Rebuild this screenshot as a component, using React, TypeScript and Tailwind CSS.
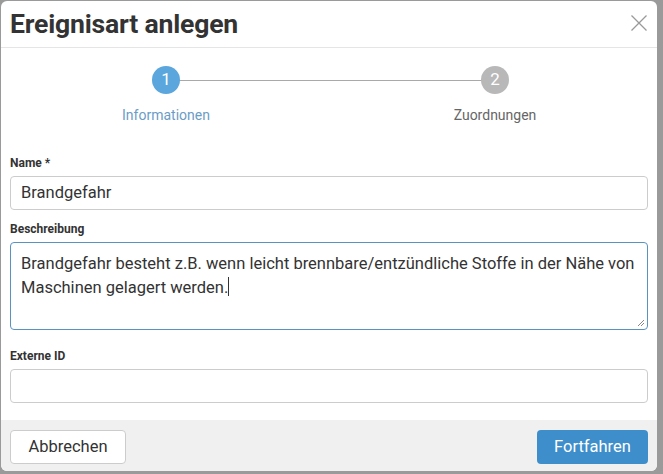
import React from "react";

function Step({
  num,
  label,
  active,
}: {
  num: number;
  label: string;
  active?: boolean;
}) {
  return (
    <div className="flex flex-col items-center w-[160px]">
      <div
        className={`w-[28px] h-[28px] rounded-full flex items-center justify-center text-white text-[17px] ${
          active ? "bg-[#5aa6dd]" : "bg-[#b8b8b8]"
        }`}
      >
        {num}
      </div>
      <span
        className={`mt-[11px] text-[14px] ${
          active ? "text-[#6b9cc6]" : "text-[#666]"
        }`}
      >
        {label}
      </span>
    </div>
  );
}

export default function App() {
  return (
    <div
      className="w-[663px] h-[474px] bg-[#9a9a9a] pl-[1px] pr-[6px] pt-[1px] overflow-hidden"
      style={{ fontFamily: "Roboto, 'Liberation Sans', sans-serif" }}
    >
      <div className="w-[656px] h-[470px] bg-white rounded-[6px] overflow-hidden flex flex-col">
        <div className="h-[47px] shrink-0 border-b border-[#e5e5e5] flex items-center justify-between pl-[9px] pr-[9px]">
          <h1 className="text-[26.6px] font-bold text-[#333] tracking-[-0.2px]">
            Ereignisart anlegen
          </h1>
          <svg width="18" height="18" viewBox="0 0 18 18" className="text-[#999] -mt-[3px]">
            <path d="M1.5 1.5 L16.5 16.5 M16.5 1.5 L1.5 16.5" stroke="currentColor" strokeWidth="1.3" />
          </svg>
        </div>

        <div className="relative flex justify-between pl-[85px] pr-[82px] pt-[18px] h-[78px] shrink-0">
          <div className="absolute left-[178px] right-[172px] top-[32px] h-px bg-[#a9a9a9]" />
          <div className="relative z-10">
            <Step num={1} label="Informationen" active />
          </div>
          <div className="relative z-10">
            <Step num={2} label="Zuordnungen" />
          </div>
        </div>

        <div className="flex flex-col px-[9px] pt-[28px] flex-1">
          <label className="text-[12px] font-bold text-[#333] mb-[4px]">Name *</label>
          <div className="h-[34px] border border-[#ccc] rounded-[4px] flex items-center px-[10px] text-[16.5px] text-[#333]">
            Brandgefahr
          </div>

          <label className="text-[12px] font-bold text-[#333] mt-[10px] mb-[4px]">
            Beschreibung
          </label>
          <div className="relative h-[88px] border border-[#5b93bf] rounded-[4px] px-[10px] pt-[9px] text-[16.5px] leading-[24px] text-[#333]">
            Brandgefahr besteht z.B. wenn leicht brennbare/entzündliche Stoffe in der Nähe von
            Maschinen gelagert werden.<span className="inline-block w-px h-[19px] bg-[#333] align-[-3px]" />
            <svg width="8" height="8" viewBox="0 0 8 8" className="absolute right-[2px] bottom-[2px]">
              <path d="M7 1 L1 7 M7 4 L4 7" stroke="#888" strokeWidth="1" />
            </svg>
          </div>

          <label className="text-[12px] font-bold text-[#333] mt-[17px] mb-[4px]">
            Externe ID
          </label>
          <div className="h-[34px] border border-[#ccc] rounded-[4px]" />
        </div>

        <div className="h-[51px] shrink-0 bg-[#f0f0f0] flex items-start justify-between px-[9px] pt-[10px]">
          <button className="h-[34px] w-[116px] bg-white border border-[#ccc] rounded-[4px] text-[16.5px] text-[#333]">
            Abbrechen
          </button>
          <button className="h-[34px] w-[111px] bg-[#3d8ecb] rounded-[4px] text-[16.5px] text-white">
            Fortfahren
          </button>
        </div>
      </div>
    </div>
  );
}
